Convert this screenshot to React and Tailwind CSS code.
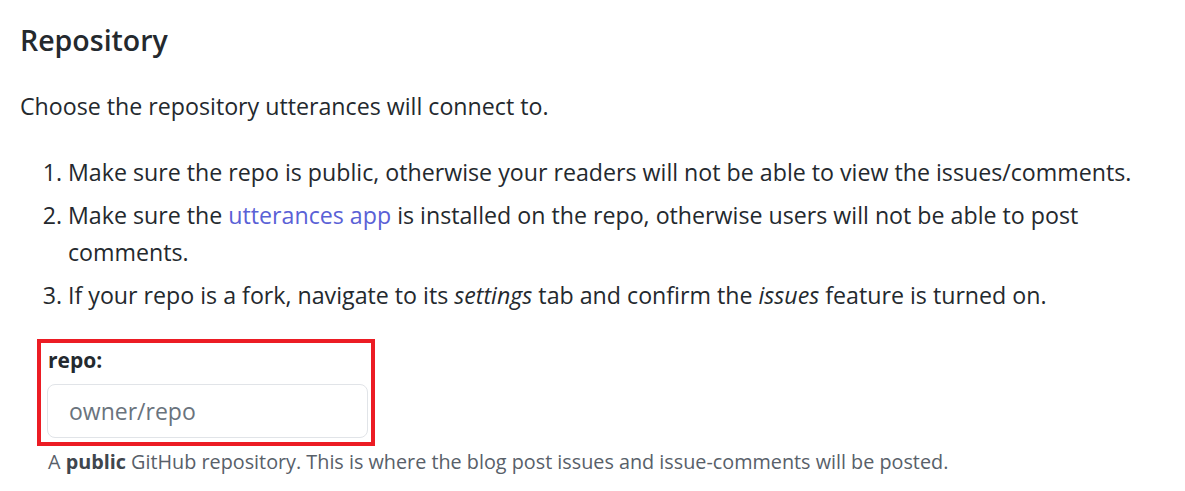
export default function App() {
  const font = { fontFamily: '"Open Sans", "Noto Sans", sans-serif' };
  return (
    <div className="w-[1185px] h-[491px] bg-white overflow-hidden text-[#24292e] pl-[20px]" style={font}>
      <h2 className="pt-[23px] text-[28.5px] leading-[34px] font-semibold">Repository</h2>
      <p className="mt-[31px] text-[23.2px] leading-[37px]">Choose the repository utterances will connect to.</p>
      <ol className="mt-[29px] text-[23.2px] leading-[37px] list-decimal pl-[48px] flex flex-col gap-[6px]">
        <li>Make sure the repo is public, otherwise your readers will not be able to view the issues/comments.</li>
        <li>
          Make sure the <a className="text-[#5a61d6]">utterances app</a> is installed on the repo, otherwise users will not be able to post comments.
        </li>
        <li>
          If your repo is a fork, navigate to its <em>settings</em> tab and confirm the <em>issues</em> feature is turned on.
        </li>
      </ol>
      <div className="mt-[25px] ml-[17px] w-[338px] border-[4px] border-[#ec1c24] pt-[3px] pl-[7px] pr-[3px] pb-[4px]">
        <label className="block text-[21px] leading-[28px] font-bold">repo:</label>
        <div className="mt-[10px] h-[54px] w-[321px] -ml-[1px] border border-[#e1e4e8] rounded-[8px] flex items-center pl-[21px] text-[23px] text-[#6a737d]">
          owner/repo
        </div>
      </div>
      <p className="mt-[4px] ml-[28px] text-[19.8px] leading-[24px] text-[#586069]">
        A <strong className="text-[#3f464e]">public</strong> GitHub repository. This is where the blog post issues and issue-comments will be posted.
      </p>
    </div>
  );
}
